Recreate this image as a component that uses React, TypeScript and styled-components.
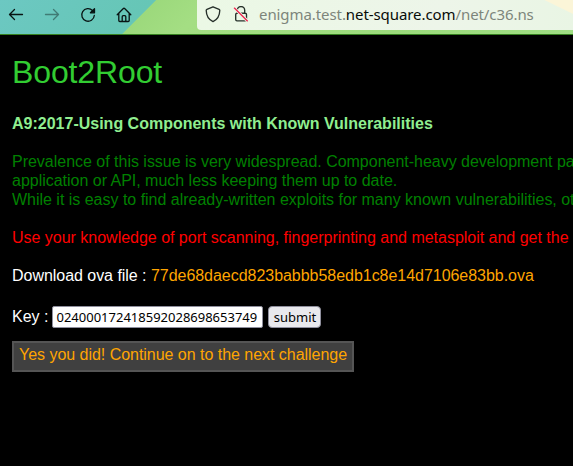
import React from 'react';
import styled, { createGlobalStyle } from 'styled-components';

const GlobalStyle = createGlobalStyle`
  * { box-sizing: border-box; }
  html, body { margin: 0; background: #000; overflow: hidden; }
`;

const Window = styled.div`
  height: 466px;
  overflow: hidden;
  background: #000;
  font: 16px/19px "Liberation Sans", Arial, sans-serif;
`;

const Toolbar = styled.header`
  display: flex;
  align-items: flex-start;
  height: 35px;
  border-bottom: 1px solid #35801f;
  background: linear-gradient(135deg, #6cc8c2 0, #66c6b6 110px, #9cd97c 111px, #a4de83 150px, #9cdb7c 300px, #a0de84 100%);
`;

const NavButtons = styled.nav`
  display: flex;
  gap: 20px;
  width: 197px;
  padding: 7px 0 0 8px;
`;

const NavIcon = styled.svg<{ $dim?: boolean }>`
  display: block;
  flex: none;
  width: 16px;
  height: 16px;
  fill: none;
  stroke: #081413;
  stroke-width: 1.3;
  stroke-linecap: round;
  stroke-linejoin: round;
  opacity: ${(p) => (p.$dim ? 0.42 : 1)};
`;

const AddressBar = styled.div`
  display: flex;
  flex: 1;
  height: 30px;
  padding: 6px 0 0 8px;
  border-radius: 0 0 0 4px;
  background: linear-gradient(26deg, transparent 0 calc(100% - 13px), #fbf5d8 calc(100% - 12px)),
    linear-gradient(100deg, #ebf8e5, #edf5e9 65%, #e9f5e4);
`;

const SecurityIcon = styled.svg`
  flex: none;
  width: 16px;
  height: 17px;
  margin-right: 12px;
  fill: none;
  stroke: #26302a;
  stroke-width: 1.35;
  stroke-linecap: round;
  stroke-linejoin: round;
`;

const Address = styled.div`
  margin-left: -2px;
  margin-top: -1px;
  color: #7d857b;
  font: 15px/19px "Noto Sans", sans-serif;
  letter-spacing: -0.08px;
  white-space: nowrap;
`;

const Domain = styled.span`
  color: #080c08;
`;

const Page = styled.main`
  padding: 17px 0 0 12px;
  white-space: nowrap;
`;

const Title = styled.h1`
  margin: 0;
  color: #32cd32;
  font-size: 32px;
  font-weight: 400;
  line-height: 40px;
  letter-spacing: -0.12px;
`;

const Subtitle = styled.h2`
  margin: 22px 0 19px;
  color: #90ee90;
  font-size: 16px;
  line-height: 19px;
`;

const Paragraph = styled.p<{ $color: string; $spacing?: string }>`
  margin: 0 0 19px;
  color: ${(p) => p.$color};
  letter-spacing: ${(p) => p.$spacing ?? '-0.015px'};
`;

const FileLink = styled.a`
  color: #ffa500;
`;

const KeyForm = styled.form`
  display: flex;
  align-items: center;
  height: 22px;
  margin-top: 21px;
  color: #fff;
`;

const KeyLabel = styled.label`
  padding-bottom: 2px;
`;

const KeyInput = styled.input`
  width: 211px;
  height: 22px;
  margin: 0 5px 0 4px;
  padding: 0 3px;
  border: 1px solid #8f8f9d;
  border-radius: 2px;
  background: #fff;
  color: #000;
  font: 13px "Noto Sans", sans-serif;
`;

const SubmitButton = styled.button`
  width: 53px;
  height: 22px;
  padding: 0;
  border: 1px solid #8f8f9d;
  border-radius: 4px;
  background: #e9e9ed;
  color: #000;
  font: 13px/18px "Noto Sans", sans-serif;
`;

const NextChallenge = styled.a`
  display: block;
  width: 342px;
  height: 31px;
  margin-top: 13px;
  padding: 2px 5px;
  border: 2px solid #555;
  background: #404040;
  color: #ffa500;
  letter-spacing: -0.03px;
`;

export default function App() {
  return (
    <Window>
      <GlobalStyle />
      <Toolbar>
        <NavButtons>
          <NavIcon viewBox="0 0 16 16"><path d="M14.5 7.5H1.5M6.5 2.5l-5 5 5 5" /></NavIcon>
          <NavIcon viewBox="0 0 16 16" $dim><path d="M1.5 7.5h13M9.5 2.5l5 5-5 5" /></NavIcon>
          <NavIcon viewBox="0 0 16 16">
            <path d="M12.5 3.5A6.3 6.3 0 1 0 14.3 8.5" />
            <path d="M14.5 1.7v4.1h-4.1z" fill="#081413" />
          </NavIcon>
          <NavIcon viewBox="0 0 16 16">
            <path d="M1.2 7.7l5.9-6q.9-.8 1.8 0l5.9 6M2.8 6.5v7q0 1 1 1h8.4q1 0 1-1v-7M6.2 14.2V9.7q0-1 1-1h1.6q1 0 1 1v4.5" />
          </NavIcon>
        </NavButtons>
        <AddressBar>
          <SecurityIcon viewBox="0 0 16 17">
            <path d="M8 .8l6.1 2.5q.7.3.7 1C14.7 9 12.8 13.5 8 15.6 3.2 13.5 1.3 9 1.2 4.3q0-.7.7-1z" />
          </SecurityIcon>
          <SecurityIcon viewBox="0 0 16 17">
            <path d="M4.3 7V4.2a3.7 3.7 0 0 1 7.4 0V7M4 7.2h8.2q1.3 0 1.3 1.3v5q0 1.4-1.3 1.4H4q-1.3 0-1.3-1.4v-5Q2.7 7.2 4 7.2z" />
            <path d="M2 2.7l12.4 12.2" stroke="#ebf8e5" strokeWidth="3" />
            <path d="M1.4 2.1l13 12.8" stroke="#ed2450" />
          </SecurityIcon>
          <Address>enigma.test.<Domain>net-square.com</Domain>/net/c36.ns</Address>
        </AddressBar>
      </Toolbar>
      <Page>
        <Title>Boot2Root</Title>
        <Subtitle>A9:2017-Using Components with Known Vulnerabilities</Subtitle>
        <Paragraph $color="#008000">
          Prevalence of this issue is very widespread. Component-heavy development pa
          <br />
          application or API, much less keeping them up to date.
          <br />
          While it is easy to find already-written exploits for many known vulnerabilities, ot
        </Paragraph>
        <Paragraph $color="#ff0000">
          Use your knowledge of port scanning, fingerprinting and metasploit and get the
        </Paragraph>
        <Paragraph $color="#ffffff" $spacing="-0.035px">
          Download ova file : <FileLink>77de68daecd823babbb58edb1c8e14d7106e83bb.ova</FileLink>
        </Paragraph>
        <KeyForm>
          <KeyLabel htmlFor="key">Key :</KeyLabel>
          <KeyInput id="key" defaultValue="024000172418592028698653749" />
          <SubmitButton type="button">submit</SubmitButton>
        </KeyForm>
        <NextChallenge>Yes you did! Continue on to the next challenge</NextChallenge>
      </Page>
    </Window>
  );
}
